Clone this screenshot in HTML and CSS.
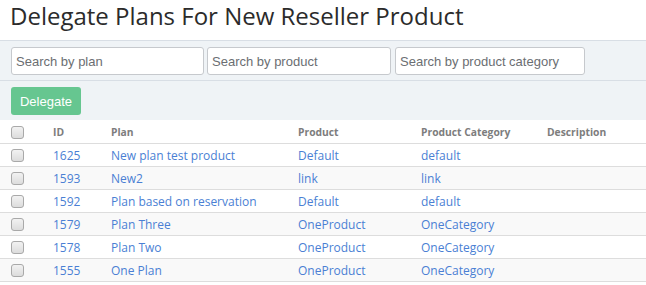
FILE: index.html
```html
<!DOCTYPE html>
<html>
<head>
<meta charset="utf-8">
<link rel="stylesheet" href="styles.css">
</head>
<body>
<h1 class="title">Delegate Plans For New Reseller Product</h1>
<div class="filters">
  <input class="search s1" type="text" placeholder="Search by plan">
  <input class="search s2" type="text" placeholder="Search by product">
  <input class="search s3" type="text" placeholder="Search by product category">
</div>
<div class="toolbar">
  <button class="btn">Delegate</button>
</div>
<table class="grid">
  <colgroup>
    <col class="c-chk"><col class="c-id"><col class="c-plan"><col class="c-prod"><col class="c-cat"><col class="c-desc">
  </colgroup>
  <thead>
    <tr><th><span class="chk"></span></th><th>ID</th><th>Plan</th><th>Product</th><th>Product Category</th><th>Description</th></tr>
  </thead>
  <tbody>
    <tr><td><span class="chk"></span></td><td class="lnk">1625</td><td class="lnk">New plan test product</td><td class="lnk">Default</td><td class="lnk">default</td><td></td></tr>
    <tr><td><span class="chk"></span></td><td class="lnk">1593</td><td class="lnk">New2</td><td class="lnk">link</td><td class="lnk">link</td><td></td></tr>
    <tr><td><span class="chk"></span></td><td class="lnk">1592</td><td class="lnk">Plan based on reservation</td><td class="lnk">Default</td><td class="lnk">default</td><td></td></tr>
    <tr><td><span class="chk"></span></td><td class="lnk">1579</td><td class="lnk">Plan Three</td><td class="lnk">OneProduct</td><td class="lnk">OneCategory</td><td></td></tr>
    <tr><td><span class="chk"></span></td><td class="lnk">1578</td><td class="lnk">Plan Two</td><td class="lnk">OneProduct</td><td class="lnk">OneCategory</td><td></td></tr>
    <tr><td><span class="chk"></span></td><td class="lnk">1555</td><td class="lnk">One Plan</td><td class="lnk">OneProduct</td><td class="lnk">OneCategory</td><td></td></tr>
  </tbody>
</table>
</body>
</html>
```
FILE: styles.css
```css
html, body {
  margin: 0;
  padding: 0;
  background: #ffffff;
}
body {
  font-family: "Open Sans", "Liberation Sans", sans-serif;
  color: #333;
}
.title {
  margin: 0;
  padding: 0 10px 0;
  height: 40px;
  font-size: 24px;
  font-weight: 400;
  line-height: 32px;
  color: #2b2b2b;
}
.filters {
  display: flex;
  gap: 3px;
  padding: 6px 11px 5px;
  background: #eff3f6;
  border-top: 1px solid #d8dee5;
  border-bottom: 1px solid #d8dee5;
}
.search {
  box-sizing: border-box;
  height: 28px;
  margin: 0;
  padding: 0 4px;
  border: 1px solid #c6c9cd;
  border-radius: 3px;
  background: #fff;
  font-family: "Liberation Sans", Arial, sans-serif;
  font-size: 13px;
  color: #555;
  outline: none;
}
.search::placeholder { color: #6b6e72; }
.s1 { width: 193px; }
.s2 { width: 184px; }
.s3 { width: 190px; margin-left: 1px; }
.toolbar {
  padding: 6px 11px 5px;
  background: #eff3f6;
}
.btn {
  box-sizing: border-box;
  height: 28px;
  width: 70px;
  margin: 0;
  padding: 0;
  border: none;
  border-radius: 3px;
  background: #66c690;
  color: #fff;
  font-family: "Liberation Sans", Arial, sans-serif;
  font-size: 13px;
}
.grid {
  width: 646px;
  border-collapse: collapse;
  table-layout: fixed;
  margin-top: 1px;
}
.c-chk { width: 53px; }
.c-id { width: 58px; }
.c-plan { width: 187px; }
.c-prod { width: 123px; }
.c-cat { width: 126px; }
.c-desc { width: 99px; }
.grid th, .grid td {
  padding: 0;
  height: 22px;
  text-align: left;
  vertical-align: middle;
  white-space: nowrap;
  border-bottom: 1px solid #dddddd;
}
.grid th {
  font-size: 10.3px;
  font-weight: 700;
  color: #7d7d7d;
}
.grid td {
  font-size: 12px;
}
.grid th:first-child, .grid td:first-child {
  padding-left: 11px;
}
.grid tbody tr:nth-child(even) td {
  background: #f9f9f9;
}
.lnk { color: #4a7fd4; }
.chk {
  display: block;
  box-sizing: border-box;
  width: 13px;
  height: 13px;
  border: 1px solid #a9a9a9;
  border-radius: 3px;
  background: linear-gradient(#f2f2f2, #dcdcdc);
}
```
